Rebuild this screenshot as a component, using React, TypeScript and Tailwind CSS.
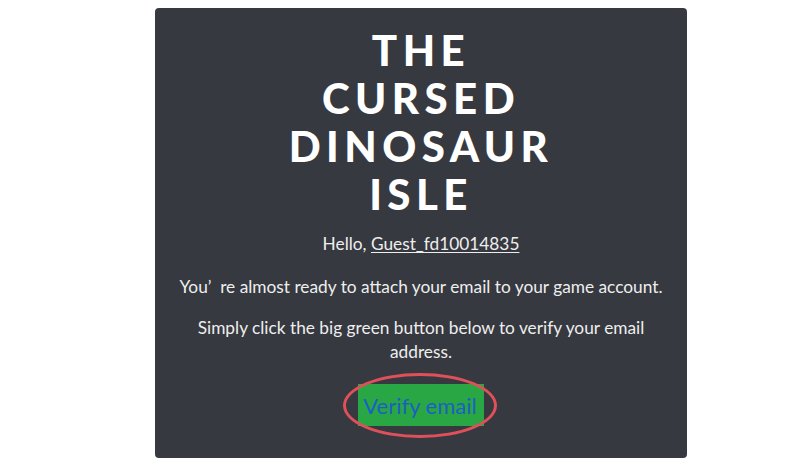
import React from 'react';

export default function App() {
  return (
    <div className="w-[800px] h-[470px] bg-white pt-[8px] pl-[155px]" style={{ fontFamily: 'Lato, "Noto Sans", sans-serif' }}>
      <div className="w-[532px] h-[450px] bg-[#36393f] rounded-[4px] flex flex-col items-center text-white">
        <h1 className="mt-[18px] text-center font-black text-[42px] leading-[48px] tracking-[0.13em]">
          THE<br />CURSED<br />DINOSAUR<br />ISLE
        </h1>
        <p className="mt-[14px] text-[17.3px] leading-[24px] text-[#eeeeee]">
          Hello, <span className="underline underline-offset-2">Guest_fd10014835</span>
        </p>
        <p className="mt-[19px] text-[17.3px] leading-[24px] text-[#eeeeee]">
          You’&nbsp;&nbsp;re almost ready to attach your email to your game account.
        </p>
        <p className="mt-[17px] w-[480px] text-center text-[17.3px] leading-[24px] text-[#eeeeee]">
          Simply click the big green button below to verify your email address.
        </p>
        <div className="relative mt-[20px]">
          <div className="bg-[#2aa745] h-[42px] pl-[5px] pr-[7px] flex items-center text-[22px] text-[#1b5fc4]">
            Verify email
          </div>
          <div className="absolute left-[-15px] top-[-11px] w-[154px] h-[65px] rounded-[50%] border-[3px] border-[#e0505a]"></div>
        </div>
      </div>
    </div>
  );
}
